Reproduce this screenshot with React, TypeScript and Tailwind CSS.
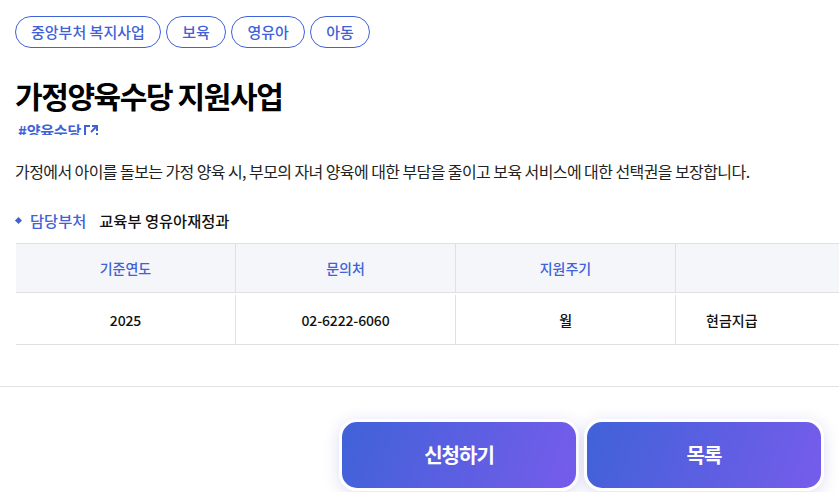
const font = { fontFamily: '"Noto Sans CJK KR", "Noto Sans", sans-serif' }

const tags = ['중앙부처 복지사업', '보육', '영유아', '아동']
const heads = ['기준연도', '문의처', '지원주기', '']
const cells = ['2025', '02-6222-6060', '월']

export default function App() {
  return (
    <div className="w-[839px] h-[492px] overflow-hidden bg-white text-[#111]" style={font}>
      {/* Tags */}
      <div className="flex gap-[5.5px] pl-[15px] pt-[16px]">
        {tags.map((t) => (
          <span
            key={t}
            className="h-[32px] px-[15px] rounded-full border border-[#4062d8] text-[#4062d8] text-[15px] leading-[30px] font-medium"
          >
            {t}
          </span>
        ))}
      </div>

      <h1 className="pl-[15px] mt-[27px] h-[40px] text-[30px] leading-[40px] font-bold tracking-[-1.4px] text-black">
        가정양육수당 지원사업
      </h1>

      {/* Hashtag link, clipped by its box */}
      <div className="ml-[18px] mt-[6px] h-[14px] overflow-hidden flex items-start gap-[3px] text-[#4062d8] text-[15px] leading-[20px] tracking-[-0.2px] font-bold">
        <span>#양육수당</span>
        <svg width="14" height="14" viewBox="0 0 14 14" fill="none" stroke="currentColor" strokeWidth="2" className="mt-[4px]">
          <path d="M6 1H1v12h12V8" />
          <path d="M7 7l5.5-5.5M8 1h5v5" />
        </svg>
      </div>

      <p className="pl-[15px] mt-[24px] h-[24px] text-[16px] leading-[24px] tracking-[-0.58px] text-[#222]">
        가정에서 아이를 돌보는 가정 양육 시, 부모의 자녀 양육에 대한 부담을 줄이고 보육 서비스에 대한 선택권을 보장합니다.
      </p>

      <div className="flex items-center pl-[16px] mt-[25px] h-[24px] text-[15.3px] leading-[24px] font-medium">
        <span className="w-[5px] h-[5px] rotate-45 bg-[#4062d8]" />
        <span className="ml-[9px] text-[#4062d8]">담당부처</span>
        <span className="ml-[13px] text-[#111]">교육부 영유아재정과</span>
      </div>

      {/* Table */}
      <div className="ml-[16px] mt-[11px] w-[880px] border-b border-[#e0e0e4]">
        <div className="grid grid-cols-[220px_220px_220px_220px] h-[50px] bg-[#f5f6fa] border-y border-[#e0e0e4]">
          {heads.map((h, i) => (
            <div
              key={i}
              className="flex items-center justify-center border-r border-[#e0e0e4] text-[14px] font-medium text-[#4062d8]"
            >
              {h}
            </div>
          ))}
        </div>
        <div className="grid grid-cols-[220px_220px_220px_220px] h-[51px] pt-[2px]">
          {cells.map((c) => (
            <div
              key={c}
              className="flex items-center justify-center pt-[1px] border-r border-[#e0e0e4] text-[14px] font-medium tracking-[-0.15px] text-[#111]"
            >
              {c}
            </div>
          ))}
          <div className="flex items-center pl-[30px] pt-[1px] text-[14px] font-medium text-[#111]">
            현금지급
          </div>
        </div>
      </div>

      <div className="mt-[41px] border-t border-[#e2e2e6]" />

      {/* Actions */}
      <div className="flex justify-end gap-[5px] pr-[15px] mt-[32px]">
        <button className="w-[240px] h-[72px] rounded-[18px] border-[3px] border-white bg-[linear-gradient(110deg,#3f62d8,#775ceb)] bg-origin-border shadow-[0_3px_16px_rgba(80,80,200,0.2)] text-white text-[20px] font-bold tracking-[-1px]">
          신청하기
        </button>
        <button className="w-[240px] h-[72px] rounded-[18px] border-[3px] border-white bg-[linear-gradient(110deg,#3f62d8,#775ceb)] bg-origin-border shadow-[0_3px_16px_rgba(80,80,200,0.2)] text-white text-[20px] font-bold tracking-[-1px]">
          목록
        </button>
      </div>
    </div>
  )
}
